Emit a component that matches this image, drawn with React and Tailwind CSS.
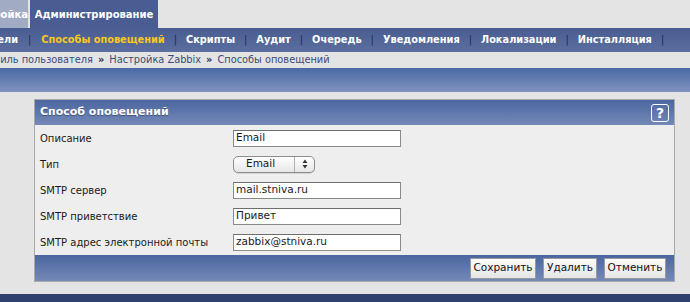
import React from 'react'

const navItems = ['Способы оповещений', 'Скрипты', 'Аудит', 'Очередь', 'Уведомления', 'Локализации', 'Инсталляция']

const fields = [
  { label: 'Описание', value: 'Email' },
  { label: 'Тип', select: 'Email' },
  { label: 'SMTP сервер', value: 'mail.stniva.ru' },
  { label: 'SMTP приветствие', value: 'Привет' },
  { label: 'SMTP адрес электронной почты', value: 'zabbix@stniva.ru' },
]

function Sep() {
  return <span className="px-[9px] text-[#1b2752] font-normal">|</span>
}

export default function App() {
  return (
    <div className="w-[690px] h-[302px] overflow-hidden bg-[#e4e4e4] font-['DejaVu_Sans',sans-serif] text-[10px] text-[#1a1a1a]">
      {/* top tabs */}
      <div className="flex h-[28px] gap-[2px]">
        <div className="w-[28px] flex justify-end items-center overflow-hidden whitespace-nowrap bg-[#a1abc4] text-white font-bold text-[10px]">
          Настройка
        </div>
        <div className="w-[128px] flex items-center justify-center bg-[#4a5d92] text-white font-bold text-[10px]">
          Администрирование
        </div>
      </div>

      {/* main menu */}
      <div className="h-[24px] flex items-center whitespace-nowrap font-bold text-[9.8px] text-white bg-gradient-to-b from-[#4a5d92] to-[#5b6e9e]">
        <span className="w-[18px] flex justify-end overflow-hidden">Пользователи</span>
        <span className="px-[10px] text-[#1b2752] font-normal">|</span>
        {navItems.map((item, i) => (
          <React.Fragment key={item}>
            <span className={i === 0 ? 'text-[#f7c81e]' : ''}>{item}</span>
            <Sep />
          </React.Fragment>
        ))}
      </div>

      {/* breadcrumb */}
      <div className="h-[16px] flex items-center whitespace-nowrap text-[9.8px] text-[#3a4a78]">
        <span className="w-[93px] flex justify-end overflow-hidden">Профиль пользователя</span>
        <span className="px-[5px] font-bold text-[#1f2b55]">»</span>
        <span>Настройка Zabbix</span>
        <span className="px-[5px] font-bold text-[#1f2b55]">»</span>
        <span>Способы оповещений</span>
      </div>

      <div className="h-[24px] bg-gradient-to-b from-[#4a69a5] to-[#7f93be]" />

      {/* panel */}
      <div className="mt-[7px] ml-[34px] w-[641px] border border-[#a9a9a9] bg-[#eeeeee]">
        <div className="h-[25px] flex items-center justify-between pl-[5px] pr-[5px] bg-gradient-to-b from-[#4b66a0] to-[#7489b7]">
          <span className="text-white font-bold text-[11px] [text-shadow:0_1px_1px_rgba(0,0,0,0.35)]">Способ оповещений</span>
          <span className="w-[18px] h-[18px] rounded-[3px] border-[1.5px] border-white flex items-center justify-center text-white font-bold text-[14px] leading-none">?</span>
        </div>

        {fields.map((f) => (
          <div key={f.label} className="h-[26px] flex items-center pl-[5px]">
            <span className="w-[193px]">{f.label}</span>
            {f.select ? (
              <div className="w-[82px] h-[17px] flex items-center rounded-[5px] border border-[#8d8d8d] bg-gradient-to-b from-white to-[#e6e6e6] shadow-[0_1px_0_rgba(0,0,0,0.1)]">
                <span className="flex-1 pl-[12px] text-[10.5px]">{f.select}</span>
                <span className="w-[20px] h-full border-l border-[#b0b0b0] flex items-center justify-center">
                  <svg width="6" height="10" viewBox="0 0 6 10">
                    <path d="M3 0.5 L5.5 4 H0.5 Z M3 9.5 L5.5 6 H0.5 Z" fill="#333" />
                  </svg>
                </span>
              </div>
            ) : (
              <div className="w-[168px] h-[17px] flex items-center bg-white border border-[#8a8a8a] border-t-[#6e6e6e] pl-[2px] text-[10.5px]">
                {f.value}
              </div>
            )}
          </div>
        ))}

        <div className="h-[26px] flex items-center justify-end gap-[7px] pr-[8px] bg-gradient-to-b from-[#4b66a0] to-[#7489b7]">
          <button className="w-[66px] h-[21px] bg-gradient-to-b from-[#fbfbfb] to-[#e6e6e6] border border-[#9a9a9a] text-[10.5px] text-[#111]">Сохранить</button>
          <button className="w-[54px] h-[21px] bg-gradient-to-b from-[#fbfbfb] to-[#e6e6e6] border border-[#9a9a9a] text-[10.5px] text-[#111]">Удалить</button>
          <button className="w-[62px] h-[21px] bg-gradient-to-b from-[#fbfbfb] to-[#e6e6e6] border border-[#9a9a9a] text-[10.5px] text-[#111]">Отменить</button>
        </div>
      </div>

      <div className="mt-[12px] h-[8px] bg-[#2f426f]" />
    </div>
  )
}
